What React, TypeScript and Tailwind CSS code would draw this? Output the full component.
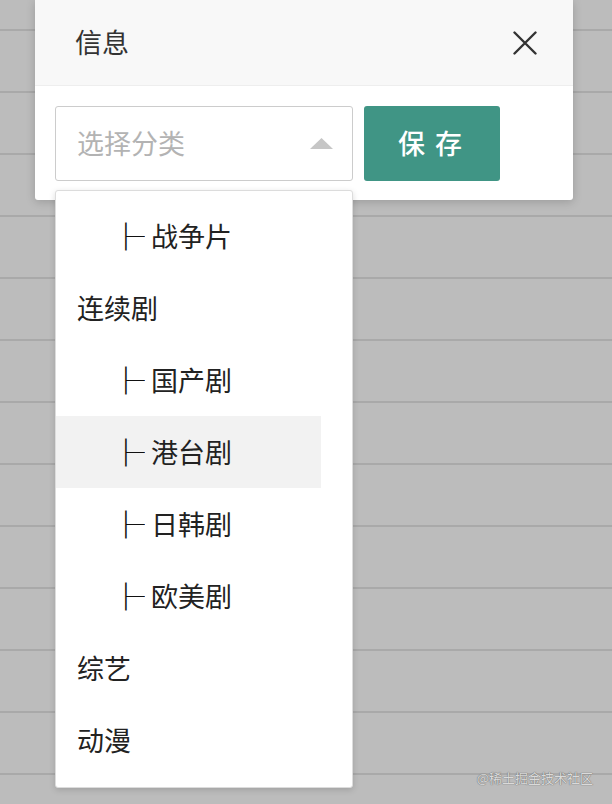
import React from 'react';

interface Option {
    label: string;
    child: boolean;
}

const options: Option[] = [
    { label: '战争片', child: true },
    { label: '连续剧', child: false },
    { label: '国产剧', child: true },
    { label: '港台剧', child: true },
    { label: '日韩剧', child: true },
    { label: '欧美剧', child: true },
    { label: '综艺', child: false },
    { label: '动漫', child: false },
];

const cjk = "font-['Noto_Sans_CJK_SC','Noto_Sans',sans-serif]";

export default function App() {
    const hovered = '港台剧';

    return (
        <div className={`relative w-[612px] h-[804px] overflow-hidden bg-[#bcbcbc] ${cjk}`}>
            {/* table rows behind the mask */}
            <div className="h-[29px]" />
            {Array.from({ length: 13 }).map((_, i) => (
                <div key={i} className="h-[62px] border-t-2 border-[#a9a9a9]" />
            ))}

            {/* watermark */}
            <div className="absolute right-[19px] bottom-[20px] text-[13px] leading-none text-[#dadada] [text-shadow:0_0_1px_#6f6f6f,0_0_1px_#6f6f6f]">
                @稀土掘金技术社区
            </div>

            {/* Dialog */}
            <div className="absolute left-[35px] top-0 w-[538px] h-[200px] bg-white rounded-b-[3px] shadow-[0_2px_10px_rgba(0,0,0,0.18)] flex flex-col">
                <div className="h-[86px] shrink-0 bg-[#f8f8f8] border-b border-[#eeeeee] flex items-center justify-between pl-[40px] pr-[36px]">
                    <span className="text-[27px] text-[#333333]">信息</span>
                    <svg width="24" height="24" viewBox="0 0 24 24" className="text-[#333333]">
                        <path d="M1.5 1.5L22.5 22.5M22.5 1.5L1.5 22.5" stroke="currentColor" strokeWidth="2.4" strokeLinecap="round" fill="none" />
                    </svg>
                </div>
                <div className="flex items-start gap-[11px] pl-[20px] pt-[20px]">
                    <div className="w-[298px] h-[75px] border border-[#cccccc] rounded-[3px] bg-white flex items-center justify-between pl-[21px] pr-[19px]">
                        <span className="text-[27px] text-[#b3b3b3]">选择分类</span>
                        <svg width="23" height="11" viewBox="0 0 23 11">
                            <polygon points="11.5,0 23,11 0,11" fill="#c6c6c6" />
                        </svg>
                    </div>
                    <button className="w-[136px] h-[75px] rounded-[3px] bg-[#409585] text-white text-[27px] font-medium tracking-[10px] pl-[6px] flex items-center justify-center">
                        保存
                    </button>
                </div>
            </div>

            {/* Dropdown */}
            <div className="absolute left-[55px] top-[190px] w-[298px] h-[598px] bg-white border border-[#dcdcdc] rounded-[3px] shadow-[0_2px_6px_rgba(0,0,0,0.15)] pt-[9px] pr-[31px]">
                {options.map((o) => (
                    <div
                        key={o.label}
                        className={`h-[72px] flex items-center text-[27px] text-[#222222] ${o.child ? 'pl-[51px]' : 'pl-[21px]'} ${o.label === hovered ? 'bg-[#f2f2f2]' : ''}`}
                    >
                        {o.child && (
                            <span className="inline-block w-[28px] mr-[16px] origin-left scale-x-[1.4] font-medium text-[#111111]">├</span>
                        )}
                        <span>{o.label}</span>
                    </div>
                ))}
            </div>
        </div>
    );
}
